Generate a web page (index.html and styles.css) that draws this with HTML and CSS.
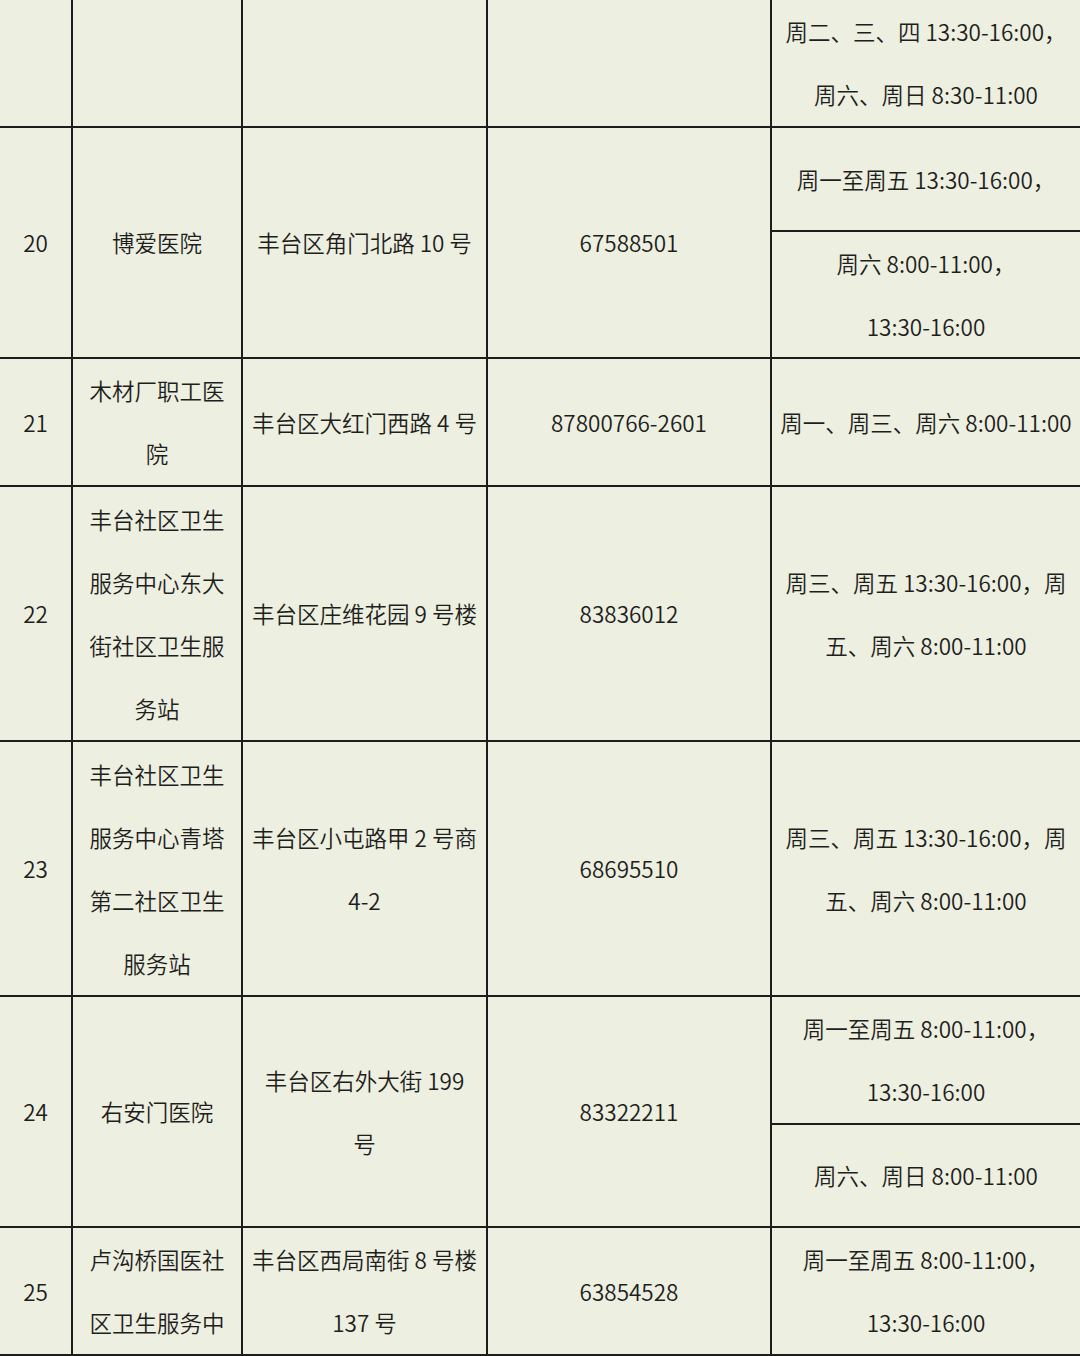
FILE: index.html
```html
<!DOCTYPE html>
<html lang="zh-CN">
<head>
<meta charset="utf-8">
<title>丰台区接种点</title>
<link rel="stylesheet" href="styles.css">
</head>
<body>
<div class="table">
  <div class="cell"></div>
  <div class="cell"></div>
  <div class="cell"></div>
  <div class="cell"></div>
  <div class="cell time"><p>周二、三、四 <span class="nw">13:30-16:00</span><span class="punct">，</span>周六、周日 <span class="nw">8:30-11:00</span></p></div>

  <div class="cell span2"><p>20</p></div>
  <div class="cell span2 name"><p>博爱医院</p></div>
  <div class="cell span2 addr"><p>丰台区角门北路 10 号</p></div>
  <div class="cell span2"><p>67588501</p></div>
  <div class="cell time"><p>周一至周五 <span class="nw">13:30-16:00</span><span class="punct">，</span></p></div>
  <div class="cell time"><p>周六 <span class="nw">8:00-11:00</span><span class="punct">，</span><span class="nw">13:30-16:00</span></p></div>

  <div class="cell"><p>21</p></div>
  <div class="cell name"><p>木材厂职工医院</p></div>
  <div class="cell addr"><p>丰台区大红门西路 4 号</p></div>
  <div class="cell"><p>87800766-2601</p></div>
  <div class="cell time"><p>周一、周三、周六 <span class="nw">8:00-11:00</span></p></div>

  <div class="cell"><p>22</p></div>
  <div class="cell name"><p>丰台社区卫生服务中心东大街社区卫生服务站</p></div>
  <div class="cell addr"><p>丰台区庄维花园 9 号楼</p></div>
  <div class="cell"><p>83836012</p></div>
  <div class="cell time"><p>周三、周五 <span class="nw">13:30-16:00</span><span class="punct">，</span>周五、周六 <span class="nw">8:00-11:00</span></p></div>

  <div class="cell"><p>23</p></div>
  <div class="cell name"><p>丰台社区卫生服务中心青塔第二社区卫生服务站</p></div>
  <div class="cell addr"><p>丰台区小屯路甲 2 号商 4-2</p></div>
  <div class="cell"><p>68695510</p></div>
  <div class="cell time"><p>周三、周五 <span class="nw">13:30-16:00</span><span class="punct">，</span>周五、周六 <span class="nw">8:00-11:00</span></p></div>

  <div class="cell span2"><p>24</p></div>
  <div class="cell span2 name"><p>右安门医院</p></div>
  <div class="cell span2 addr"><p>丰台区右外大街 199 号</p></div>
  <div class="cell span2"><p>83322211</p></div>
  <div class="cell time"><p>周一至周五 <span class="nw">8:00-11:00</span><span class="punct">，</span><span class="nw">13:30-16:00</span></p></div>
  <div class="cell time"><p>周六、周日 <span class="nw">8:00-11:00</span></p></div>

  <div class="cell"><p>25</p></div>
  <div class="cell name"><p>卢沟桥国医社区卫生服务中</p></div>
  <div class="cell addr"><p>丰台区西局南街 8 号楼 137 号</p></div>
  <div class="cell"><p>63854528</p></div>
  <div class="cell time"><p>周一至周五 <span class="nw">8:00-11:00</span><span class="punct">，</span><span class="nw">13:30-16:00</span></p></div>
</div>
</body>
</html>
```

FILE: styles.css
```css
html, body {
  margin: 0;
  padding: 0;
  background: #edefe1;
  overflow: hidden;
}

.table {
  width: 1080px;
  height: 1356px;
  display: grid;
  grid-template-columns: 71px 168px 243px 282px 308px;
  grid-template-rows: 126px 102px 125px 126px 253px 253px 126px 101px 126px;
  gap: 2px;
  padding-bottom: 2px;
  box-sizing: border-box;
  background: #1d1d1b;
  font-family: "Noto Sans CJK SC", "Noto Sans", sans-serif;
  font-weight: 350;
  font-size: 22.5px;
  line-height: 63px;
  color: #1e1e1c;
}

.cell {
  background: #edefe1;
  display: flex;
  align-items: center;
  justify-content: center;
  text-align: center;
  overflow: hidden;
}

.cell p {
  margin: 0;
  width: 100%;
}

.span2 {
  grid-row: span 2;
}

.name {
  padding: 0 12px;
}

.addr {
  padding: 0 8px;
}

.time {
  padding: 0 8px;
}

.nw {
  white-space: nowrap;
}

.punct {
  font-family: "Noto Sans CJK TC", "Noto Sans CJK SC", sans-serif;
}
```
